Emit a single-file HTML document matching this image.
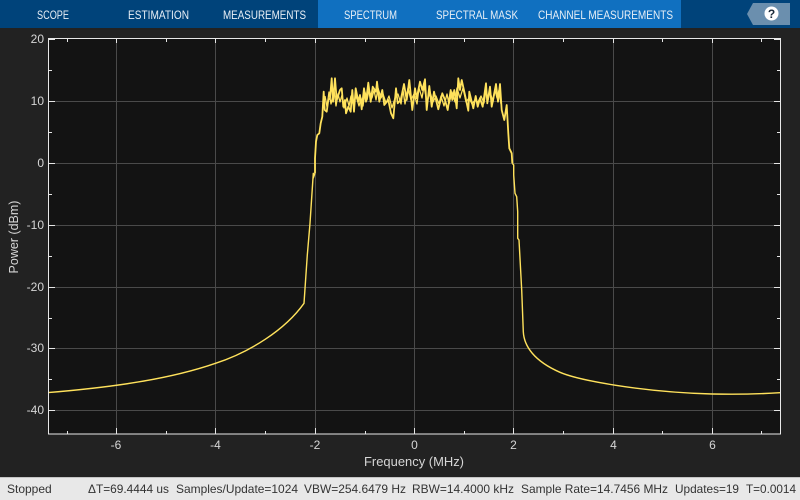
<!DOCTYPE html>
<html>
<head>
<meta charset="utf-8">
<style>
html,body{margin:0;padding:0;background:#222;width:800px;height:500px;overflow:hidden}
svg{display:block;font-family:"Liberation Sans",sans-serif}
</style>
</head>
<body>
<svg width="800" height="500" viewBox="0 0 800 500" xmlns="http://www.w3.org/2000/svg">
<rect width="800" height="500" fill="#222222"/>
<rect width="800" height="28" fill="#00437a"/>
<rect x="318" width="363" height="28" fill="#1070c0"/>
<g fill="#e8eff6" font-size="12">
<text x="37" y="19" textLength="32" lengthAdjust="spacingAndGlyphs">SCOPE</text>
<text x="128" y="19" textLength="61" lengthAdjust="spacingAndGlyphs">ESTIMATION</text>
<text x="223" y="19" textLength="83" lengthAdjust="spacingAndGlyphs">MEASUREMENTS</text>
<text x="344" y="19" textLength="53" lengthAdjust="spacingAndGlyphs">SPECTRUM</text>
<text x="436" y="19" textLength="82" lengthAdjust="spacingAndGlyphs">SPECTRAL MASK</text>
<text x="538" y="19" textLength="135" lengthAdjust="spacingAndGlyphs">CHANNEL MEASUREMENTS</text>
</g>
<polygon points="747,14 753,3 790,3 790,25 753,25" fill="#6b8fae"/>
<circle cx="771.5" cy="13.5" r="7" fill="#ffffff"/>
<text x="771.5" y="18" text-anchor="middle" font-size="12" font-weight="bold" fill="#1a2a3a">?</text>

<rect x="48.5" y="38.5" width="732" height="396" fill="#131313"/>
<g stroke="#4a4a4a" stroke-width="1" shape-rendering="crispEdges">
<path d="M116.5 39V434M215.5 39V434M315.5 39V434M414.5 39V434M513.5 39V434M613.5 39V434M712.5 39V434"/>
<path d="M49 101.5H780M49 163.5H780M49 225.5H780M49 287.5H780M49 348.5H780M49 410.5H780"/>
</g>
<path fill="none" stroke="#ffe25c" stroke-width="1.4" stroke-linejoin="round" d="M48,392.6 C115,387 170,379 215.5,363.3 C250,352 285,330 304,303.3 L307.3,255 310,223.3 313.3,173.3 313.3,178 315,173 M512.3,163.3 L513.7,165 513.7,175 515,193.3 516.7,196.7 517.7,211.7 517.7,238.3 519,240 521.7,290 523.3,331.7 C524,346 534,361 560,372.3 C578,380 640,392 712,394 C735,394.5 760,394 780,392.7"/>
<path fill="none" stroke="#ffe25c" stroke-width="1.8" stroke-linejoin="round" d="M315,173 L315,158.3 316,141.7 317.3,135 319.3,133.3 320.7,123.3 322.3,116.7 323.7,91.7 324.7,110 326.7,111.7 328.3,100 330,98.3 331.7,78.3 333,101.7 335,78.3 336.7,100 340,90 341.7,88.3 343.3,106.7 345,100 346,113.3 348.3,106.7 350.7,111.7 352.3,90 354,111.7 355.7,88.3 358.3,101.7 360,95 361.7,109.3 364,88.3 366,101.7 368.3,82.7 370.7,101.7 372.7,86.7 376,91.7 377,81.7 379.3,101.7 382.3,90 384.3,105 388.3,100 391,113.3 393.3,118.3 396,88.3 397.7,103.3 400.7,100 404,84 406.7,100 409.3,80 412.3,110 415,88.3 416.7,98.3 420,81.7 422.3,90 425,79.3 426.7,110 429.3,86 431.7,106.7 434,91.7 438.3,109.3 442.3,93.3 445,100 447.7,110 450.7,90 452.3,100 454.3,90 456.7,108.3 458.3,78.3 460,90 461.7,80 465,95 468.3,110.7 469.3,91.7 473.3,108.3 475.7,96 477.7,106.7 480,98.3 482.7,106.7 486,83.3 487.3,103.3 490,86.7 491.7,106.7 496,84 498,101.7 500,84 501.7,110 504.3,120 506.7,105 508.3,133.3 509.3,148.3 511.7,153.3 512.3,163.3"/>
<path fill="none" stroke="#ffe25c" stroke-width="1.3" stroke-linejoin="round" d="M325,96 L327,107 329,92 331,104 334,90 336,106 338,94 340,102 342,95 344,108 347,98 349,106 351,96 353,104 356,96 359,106 361,98 363,106 365,92 367,100 369,90 372,98 374,90 376,100 378,88 381,98 383,94 386,103 389,96 392,108 395,98 398,94 401,104 403,90 405,104 408,88 411,100 414,94 417,104 419,88 422,98 424,86 427,102 430,92 433,102 436,96 439,104 441,96 444,106 447,94 449,104 452,92 455,102 457,88 460,98 463,88 466,102 469,98 472,104 475,100 478,102 481,96 484,103 486,90 488,100 490,92 493,102 495,90 497,98 499,90 501,104"/>
<g stroke="#e6e6e6" stroke-width="1" fill="none" shape-rendering="crispEdges">
<rect x="48.5" y="38.5" width="732" height="395.5" stroke="#e8e8e8"/>
<path d="M67.5 39v3M116.5 39v4M166.5 39v3M215.5 39v4M265.5 39v3M315.5 39v4M365.5 39v3M414.5 39v4M464.5 39v3M513.5 39v4M563.5 39v3M613.5 39v4M662.5 39v3M712.5 39v4M761.5 39v3"/>
<path d="M67.5 434v-3M116.5 434v-6M166.5 434v-3M215.5 434v-6M265.5 434v-3M315.5 434v-6M365.5 434v-3M414.5 434v-6M464.5 434v-3M513.5 434v-6M563.5 434v-3M613.5 434v-6M662.5 434v-3M712.5 434v-6M761.5 434v-3"/>
<path d="M49 39.5h6M49 70.5h3M49 101.5h6M49 132.5h3M49 163.5h6M49 194.5h3M49 225.5h6M49 256.5h3M49 287.5h6M49 318.5h3M49 348.5h6M49 379.5h3M49 410.5h6"/>
<path d="M780 39.5h-6M780 70.5h-3M780 101.5h-6M780 132.5h-3M780 163.5h-6M780 194.5h-3M780 225.5h-6M780 256.5h-3M780 287.5h-6M780 318.5h-3M780 348.5h-6M780 379.5h-3M780 410.5h-6"/>
</g>
<g fill="#d6d6d6" font-size="12" text-anchor="end">
<text x="44" y="43">20</text>
<text x="44" y="105">10</text>
<text x="44" y="167">0</text>
<text x="44" y="229">-10</text>
<text x="44" y="291">-20</text>
<text x="44" y="352">-30</text>
<text x="44" y="414">-40</text>
</g>
<g fill="#d6d6d6" font-size="12" text-anchor="middle">
<text x="116" y="449">-6</text>
<text x="215.5" y="449">-4</text>
<text x="315" y="449">-2</text>
<text x="414.5" y="449">0</text>
<text x="513.5" y="449">2</text>
<text x="613.5" y="449">4</text>
<text x="712.5" y="449">6</text>
</g>
<text x="364" y="466" font-size="13" fill="#d6d6d6" textLength="100" lengthAdjust="spacingAndGlyphs">Frequency (MHz)</text>
<text transform="translate(18,237) rotate(-90)" text-anchor="middle" font-size="12.5" fill="#d6d6d6">Power (dBm)</text>

<rect y="477" width="800" height="23" fill="#e8e8e8"/>
<rect y="477" width="800" height="1" fill="#c4c4c4"/>
<g fill="#333" font-size="12">
<text x="7" y="493">Stopped</text>
<text x="88" y="493" textLength="81" lengthAdjust="spacingAndGlyphs">ΔT=69.4444 us</text>
<text x="176" y="493" textLength="122" lengthAdjust="spacingAndGlyphs">Samples/Update=1024</text>
<text x="304" y="493" textLength="102" lengthAdjust="spacingAndGlyphs">VBW=254.6479 Hz</text>
<text x="412" y="493" textLength="102" lengthAdjust="spacingAndGlyphs">RBW=14.4000 kHz</text>
<text x="521" y="493" textLength="147" lengthAdjust="spacingAndGlyphs">Sample Rate=14.7456 MHz</text>
<text x="675" y="493" textLength="64" lengthAdjust="spacingAndGlyphs">Updates=19</text>
<text x="746" y="493" textLength="50" lengthAdjust="spacingAndGlyphs">T=0.0014</text>
</g>
</svg>
</body>
</html>
